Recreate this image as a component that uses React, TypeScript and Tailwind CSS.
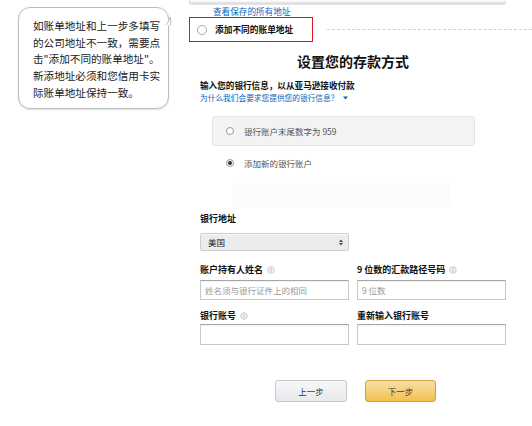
import React from "react";

const FONT = '"Noto Sans CJK SC", "Noto Sans", "Liberation Sans", sans-serif';

function Info() {
  return (
    <svg width="8" height="8" viewBox="0 0 8 8" className="ml-[4px] inline-block">
      <circle cx="4" cy="4" r="3.3" fill="#f1f1f1" stroke="#c8c8c8" strokeWidth="0.9" />
      <rect x="3.5" y="3.3" width="1" height="2.4" fill="#bbb" />
      <rect x="3.5" y="2" width="1" height="0.9" fill="#bbb" />
    </svg>
  );
}

function Radio({ checked }: { checked?: boolean }) {
  return (
    <span className="w-[8px] h-[8px] rounded-full border border-[#9a9a9a] bg-white flex items-center justify-center shrink-0">
      {checked && <span className="w-[4px] h-[4px] rounded-full bg-[#333]" />}
    </span>
  );
}

export default function App() {
  return (
    <div className="relative w-[532px] h-[426px] bg-white overflow-hidden" style={{ fontFamily: FONT }}>
      {/* annotation bubble */}
      <div className="absolute left-[18px] top-[7px] w-[151px] h-[102px] rounded-[12px] border border-[#bdbdbd] bg-white shadow-[0_1px_2px_rgba(0,0,0,0.12)] pl-[14px] pt-[10px] text-[10.6px] leading-[16.7px] text-[#222]">
        <div>如账单地址和上一步多填写</div>
        <div>的公司地址不一致，需要点</div>
        <div>击"添加不同的账单地址"。</div>
        <div>新添地址必须和您信用卡实</div>
        <div>际账单地址保持一致。</div>
      </div>
      <svg className="absolute left-[162px] top-[12px]" width="16" height="16" viewBox="0 0 16 16">
        <path d="M0 14 C5 12 7 9 8 5 C9 9 11 11 14 12" fill="white" stroke="none" />
        <path d="M4 13 C6 11 7 8 8 5 C9 8 9 10 8 14" fill="white" stroke="#bdbdbd" strokeWidth="1" />
      </svg>

      <div className="ml-[189px] flex flex-col">
        <div className="w-[317px] h-[5px] border-x border-b-[3px] border-[#e2e2e2] rounded-b-[3px] bg-[#fafafa]" />
        <div className="ml-[24px] mt-[1px] text-[8.6px] leading-[10px] text-[#0066c0]">查看保存的所有地址</div>
        <div className="flex items-center mt-[1px]">
          <div className="w-[124px] h-[25px] border-[1.5px] border-[#e3131b] flex items-center pl-[7px] gap-[8px]">
            <span className="w-[10px] h-[10px] rounded-full border border-[#a8a8a8] bg-white shrink-0" />
            <span className="text-[8.7px] leading-[11px] font-bold text-[#111]">添加不同的账单地址</span>
          </div>
          <div className="ml-[14px] flex-1 border-t border-dashed border-[#d0d0d0]" />
        </div>

        <div className="pl-[11px] w-[317px] flex flex-col">
          <div className="mt-[10px] text-center text-[14px] leading-[18px] font-bold text-[#111]">设置您的存款方式</div>
          <div className="mt-[10px] text-[8.6px] leading-[11px] font-bold text-[#111]">输入您的银行信息，以从亚马逊接收付款</div>
          <div className="mt-[2px] flex items-center text-[7.7px] leading-[10px] text-[#0066c0]">
            为什么我们会要求您提供您的银行信息？
            <svg width="5" height="4" viewBox="0 0 5 4" className="ml-[5px]">
              <path d="M0 0.5 L5 0.5 L2.5 3.5 Z" fill="#0066c0" />
            </svg>
          </div>

          <div className="mt-[13px] ml-[12px] w-[263px] h-[30px] rounded-[3px] border border-[#e4e4e4] bg-[#f3f3f3] flex items-center pl-[13px] gap-[10px]">
            <Radio />
            <span className="text-[8.5px] leading-[11px] text-[#555]">银行账户末尾数字为 959</span>
          </div>
          <div className="mt-[7px] ml-[12px] h-[20px] flex items-center pl-[14px] gap-[10px]">
            <Radio checked />
            <span className="text-[8.5px] leading-[11px] text-[#555]">添加新的银行账户</span>
          </div>
          <div className="mt-[10px] ml-[33px] w-[217px] h-[24px] bg-[#fcfcfc]" />

          <div className="mt-[6px] text-[9px] leading-[12px] font-bold text-[#111]">银行地址</div>
          <div className="mt-[8px] w-[149px] h-[18px] rounded-[2px] border border-[#cfcfcf] bg-[#ececec] shadow-[inset_0_1px_0_#f8f8f8] flex items-center justify-between pl-[7px] pr-[5px]">
            <span className="text-[8.5px] leading-[10px] text-[#222]">美国</span>
            <svg width="4" height="7" viewBox="0 0 4 7">
              <path d="M0 3 L2 0.5 L4 3 Z" fill="#444" />
              <path d="M0 4 L2 6.5 L4 4 Z" fill="#444" />
            </svg>
          </div>

          <div className="mt-[13px] flex gap-[8px]">
            <div className="w-[149px] flex flex-col">
              <div className="flex items-center text-[9px] leading-[12px] font-bold text-[#111]">
                账户持有人姓名<Info />
              </div>
              <div className="mt-[4px] h-[20px] border border-[#c9c9c9] border-t-[#a6a6a6] shadow-[inset_0_1px_1px_rgba(0,0,0,0.06)] flex items-center pl-[4px] text-[8.5px] text-[#9a9a9a]">
                姓名须与银行证件上的相同
              </div>
            </div>
            <div className="w-[149px] flex flex-col">
              <div className="flex items-center text-[9px] leading-[12px] font-bold text-[#111]">
                9 位数的汇款路径号码<Info />
              </div>
              <div className="mt-[4px] h-[20px] border border-[#c9c9c9] border-t-[#a6a6a6] shadow-[inset_0_1px_1px_rgba(0,0,0,0.06)] flex items-center pl-[4px] text-[8.5px] text-[#9a9a9a]">
                9 位数
              </div>
            </div>
          </div>

          <div className="mt-[10px] flex gap-[8px]">
            <div className="w-[149px] flex flex-col">
              <div className="flex items-center text-[9px] leading-[12px] font-bold text-[#111]">
                银行账号<Info />
              </div>
              <div className="mt-[2px] h-[21px] border border-[#c9c9c9] border-t-[#a6a6a6] shadow-[inset_0_1px_1px_rgba(0,0,0,0.06)]" />
            </div>
            <div className="w-[149px] flex flex-col">
              <div className="flex items-center text-[9px] leading-[12px] font-bold text-[#111]">重新输入银行账号</div>
              <div className="mt-[2px] h-[21px] border border-[#c9c9c9] border-t-[#a6a6a6] shadow-[inset_0_1px_1px_rgba(0,0,0,0.06)]" />
            </div>
          </div>

          <div className="mt-[35px] ml-[75px] flex gap-[18px]">
            <div className="w-[72px] h-[22px] rounded-[3px] border border-[#c6c6c6] bg-gradient-to-b from-[#f7f8fa] to-[#e7e9ec] flex items-center justify-center text-[8.5px] text-[#333]">
              上一步
            </div>
            <div className="w-[71px] h-[22px] rounded-[3px] border border-[#c9a440] bg-gradient-to-b from-[#f7dfa5] to-[#f0c14b] flex items-center justify-center text-[8.5px] text-[#333]">
              下一步
            </div>
          </div>
        </div>
      </div>
    </div>
  );
}
